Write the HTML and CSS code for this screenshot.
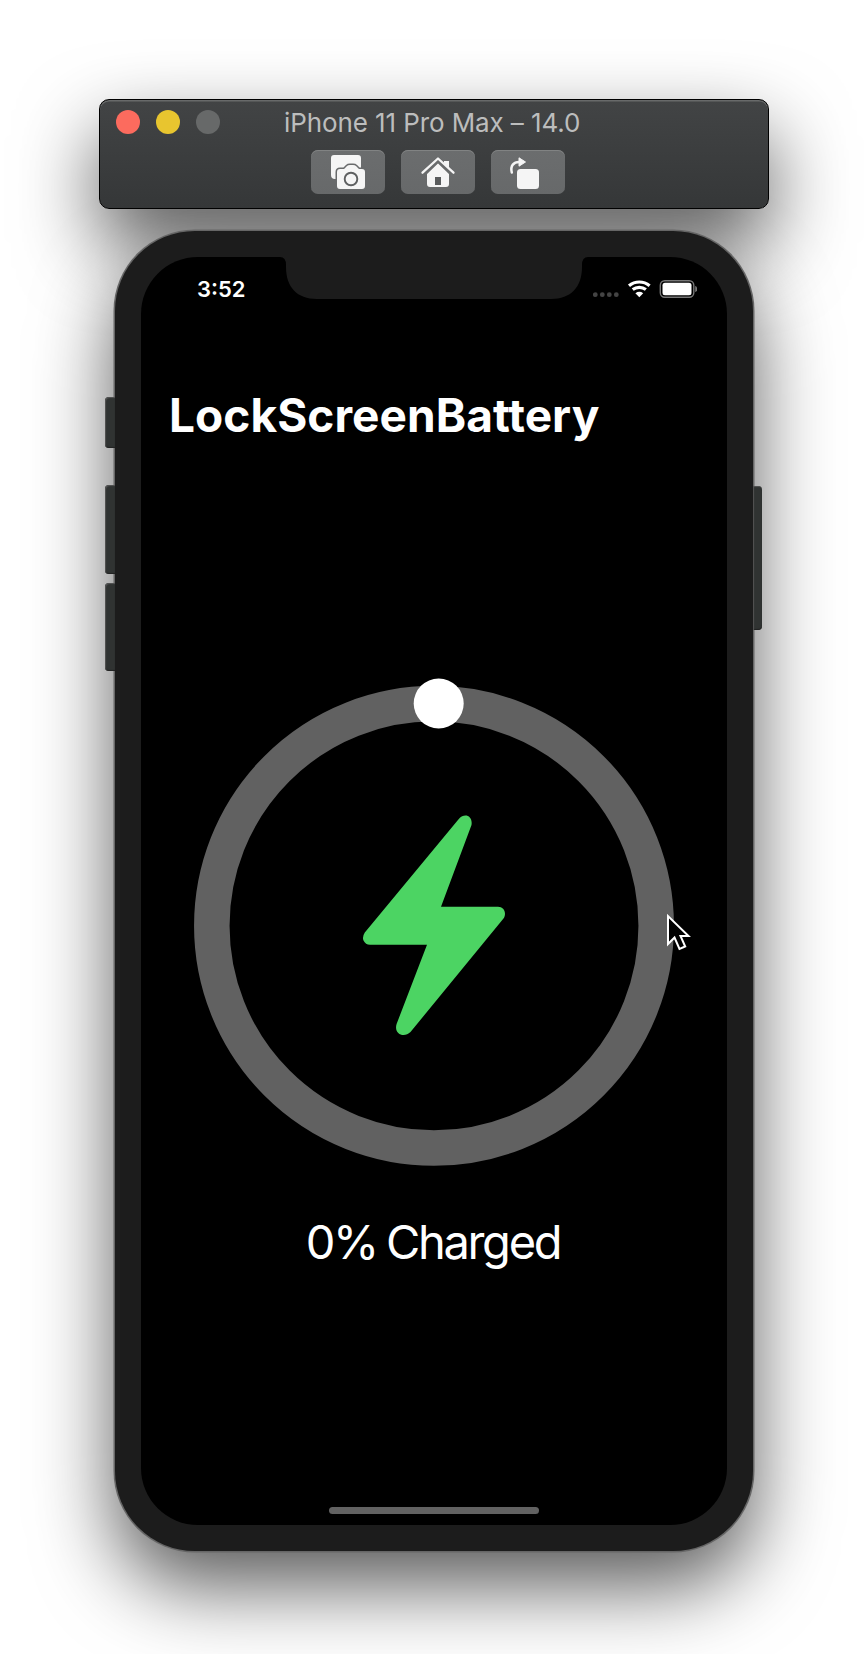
FILE: index.html
```html
<!DOCTYPE html>
<html lang="en">
<head>
<meta charset="utf-8">
<title>iPhone 11 Pro Max – 14.0</title>
<link rel="stylesheet" href="styles.css">
</head>
<body>
<main class="desktop">
  <header class="window">
    <div class="titlebar">
      <div class="lights"><i class="light close"></i><i class="light minimize"></i><i class="light disabled"></i></div>
      <h1 class="title">iPhone 11 Pro Max – 14.0</h1>
    </div>
    <nav class="toolbar">
      <button class="tool" aria-label="Screenshot">
        <svg width="74" height="44" viewBox="0 0 74 44">
          <path fill="#f5f5f5" d="M23 5h24a3 3 0 0 1 3 3v14H25v7h-1q-4 0-4-4V8a3 3 0 0 1 3-3z"/>
          <path fill="#f5f5f5" stroke="#696b6c" stroke-width="3" paint-order="stroke" d="M29 19h4l3-3q1-1 3-1h3q2 0 3 1l3 3h3q3 0 3 3v14q0 3-3 3H29q-3 0-3-3V22q0-3 3-3z"/>
          <circle cx="40" cy="29" r="6.3" fill="none" stroke="#5e6061" stroke-width="1.9"/>
        </svg>
      </button>
      <button class="tool" aria-label="Home">
        <svg width="74" height="44" viewBox="0 0 74 44">
          <path fill="#f5f5f5" d="M26 23 37 12.5 48 23v11q0 3-3 3H29q-3 0-3-3zM43 11.5h5v9l-5-5z"/>
          <path fill="#5a5c5d" d="M34 27h6v8h-6z"/>
          <path fill="none" stroke="#696b6c" stroke-width="5" d="M23 23.5 37 10l14 13.500"/>
          <path fill="#f5f5f5" d="M43 11h5v6.500l-5-4.500z"/>
          <path fill="none" stroke="#f5f5f5" stroke-width="2.300" stroke-linecap="round" stroke-linejoin="round" d="M21.500 22.700 37 8.500l15.500 14.200"/>
        </svg>
      </button>
      <button class="tool" aria-label="Rotate">
        <svg width="74" height="44" viewBox="0 0 74 44">
          <rect x="26" y="19" width="22" height="20" rx="3.500" fill="#f5f5f5"/>
          <path fill="none" stroke="#f5f5f5" stroke-width="2.500" stroke-linecap="round" d="M20.800 22.500C19 15.500 23 12 28 12"/>
          <path fill="#f5f5f5" stroke="#f5f5f5" stroke-linejoin="round" d="M28 7.800 34.500 12 28 16.200z"/>
        </svg>
      </button>
    </nav>
  </header>

  <section class="phone">
    <i class="key mute"></i><i class="key volume-up"></i><i class="key volume-down"></i><i class="key power"></i>
    <div class="screen">
      <svg class="notch" width="308" height="43" viewBox="0 0 308 43"><path fill="#1c1c1c" d="M0 0h308q-6 0-6 8v2c0 20-11 32-31 32H37C17 42 6 30 6 10V8q0-8-6-8z"/></svg>
      <div class="status">
        <time class="clock">3:52</time>
        <svg width="104" height="18" viewBox="0 0 104 18">
          <g fill="#444"><circle cx="2.300" cy="14.700" r="2.400"/><circle cx="9.300" cy="14.700" r="2.400"/><circle cx="16.300" cy="14.700" r="2.400"/><circle cx="23.300" cy="14.700" r="2.400"/></g>
          <g fill="none" stroke="#fff" stroke-width="3.200"><path d="M36 5.700Q40.500 2 46.300 2T56.600 5.700"/><path d="M39.700 9.500Q42.600 7.300 46.300 7.300T52.900 9.500"/></g>
          <path fill="#fff" d="M42.400 13.200q3.900-2.900 7.800 0l-3.900 4z"/>
          <rect x="67.300" y=".8" width="33.500" height="16.400" rx="4.500" fill="none" stroke="#777" stroke-width="1.400"/>
          <rect x="69.500" y="2.700" width="29" height="12.600" rx="2.500" fill="#fff"/>
          <path fill="#777" d="M102.200 6q2 .5 2 3t-2 3z"/>
        </svg>
      </div>
      <h2 class="app-name">LockScreenBattery</h2>
      <svg class="gauge" width="480" height="491" viewBox="194 675 480 491">
        <circle cx="434" cy="925.800" r="222.200" fill="none" stroke="#616161" stroke-width="35.500"/>
        <circle cx="438.700" cy="703.500" r="25" fill="#fff"/>
        <path fill="#4cd463" d="M459 818.700 364.800 932.600Q362 937 363.500 940.500 365.500 944.700 370 944.700H427L396.600 1024C393.500 1034 404 1038.500 410.500 1032L503.500 918.500C507 913 504 906.700 498 906.700H441L471.500 825C473 815.500 464.500 812.500 459 818.700z"/>
      </svg>
      <p class="charge">0% Charged</p>
      <i class="home-bar"></i>
    </div>
  </section>
  <svg class="pointer" width="26" height="40" viewBox="0 0 26 40"><path fill="#000" stroke="#fff" stroke-width="2" d="M2 3v28l6.500-6.500 5 11.500 5.700-2.500-4.700-10.500H22.500z"/></svg>
</main>
</body>
</html>
```

FILE: styles.css
```css
* { box-sizing: border-box; }
body { margin: 0; background: #fff; font-family: Inter, "Liberation Sans", sans-serif; }
h1, h2, p { margin: 0; }
svg { display: block; }

.desktop {
  position: relative;
  width: 868px;
  height: 1654px;
  overflow: hidden;
  padding-top: 99px;
  display: flex;
  flex-direction: column;
  align-items: center;
  gap: 22px;
}

.window {
  position: relative;
  width: 670px;
  height: 110px;
  border: 1px solid #000;
  border-radius: 10px;
  background: linear-gradient(#424445, #353738);
  box-shadow: inset 0 1.500px 0 #686a6a, 0 35px 80px rgba(0, 0, 0, .65);
}
.titlebar { display: grid; grid-template-columns: 168px 1fr; height: 50px; padding-left: 16px; }
.lights { display: flex; gap: 16px; padding-top: 10px; }
.light { flex: none; width: 24px; height: 24px; border-radius: 50%; }
.close { background: #fc6b5e; }
.minimize { background: #e8c52f; }
.disabled { background: #676969; }
.title { padding-top: 7px; color: #bcbdbd; font-size: 26px; line-height: 32px; font-weight: 400; letter-spacing: -.1px; white-space: nowrap; }
.toolbar { display: flex; gap: 16px; padding-left: 211px; }
.tool { width: 74px; height: 44px; padding: 0; border: 0; border-radius: 7px; background: linear-gradient(#6b6d6e, #67696a); box-shadow: inset 0 1px 0 #818383; }

.phone {
  position: relative;
  width: 638px;
  height: 1320px;
  padding: 26px;
  border-radius: 80px;
  background: #1c1c1c;
  box-shadow: 0 0 0 1.500px #666;
}
/* The shadow sits behind the toolbar window as well as the phone. */
.phone::before {
  content: "";
  position: absolute;
  z-index: -1;
  inset: 0;
  border-radius: 80px;
  box-shadow: 0 35px 80px rgba(0, 0, 0, .65);
}
.key { position: absolute; left: -10px; width: 10px; border-radius: 4px 0 0 4px; background: #303332; box-shadow: inset 1px 1px 1px #555, inset 0 -1px 1px #222; }
.mute { top: 166px; height: 51px; }
.volume-up { top: 254px; height: 89px; }
.volume-down { top: 352px; height: 88px; }
.power { left: auto; right: -9px; top: 255px; height: 144px; width: 9px; border-radius: 0 4px 4px 0; }

.screen {
  position: relative;
  height: 1268px;
  border-radius: 57px;
  background: #000;
  color: #fff;
  display: flex;
  flex-direction: column;
  align-items: center;
}
.notch { position: absolute; top: 0; left: 139px; }
.status { width: 100%; display: flex; justify-content: space-between; padding: 23px 30px 0 56px; height: 60px; }
.clock { font-size: 22px; line-height: 18px; font-weight: 600; letter-spacing: 0; }
.app-name { align-self: flex-start; margin: 70px 0 0 28px; font-size: 46px; line-height: 56px; font-weight: 700; letter-spacing: .05px; font-feature-settings: "calt" 0, "liga" 0, "dlig" 0; }
.gauge { margin-top: 232px; }
.charge { margin-top: 48px; font-size: 47px; line-height: 56px; font-weight: 370; letter-spacing: -2.300px; word-spacing: -2px; padding-right: 2px; }
.home-bar { width: 210px; height: 7px; margin: auto 0 11px; border-radius: 4px; background: #626262; }

.pointer { position: absolute; left: 666px; top: 913px; }
```
